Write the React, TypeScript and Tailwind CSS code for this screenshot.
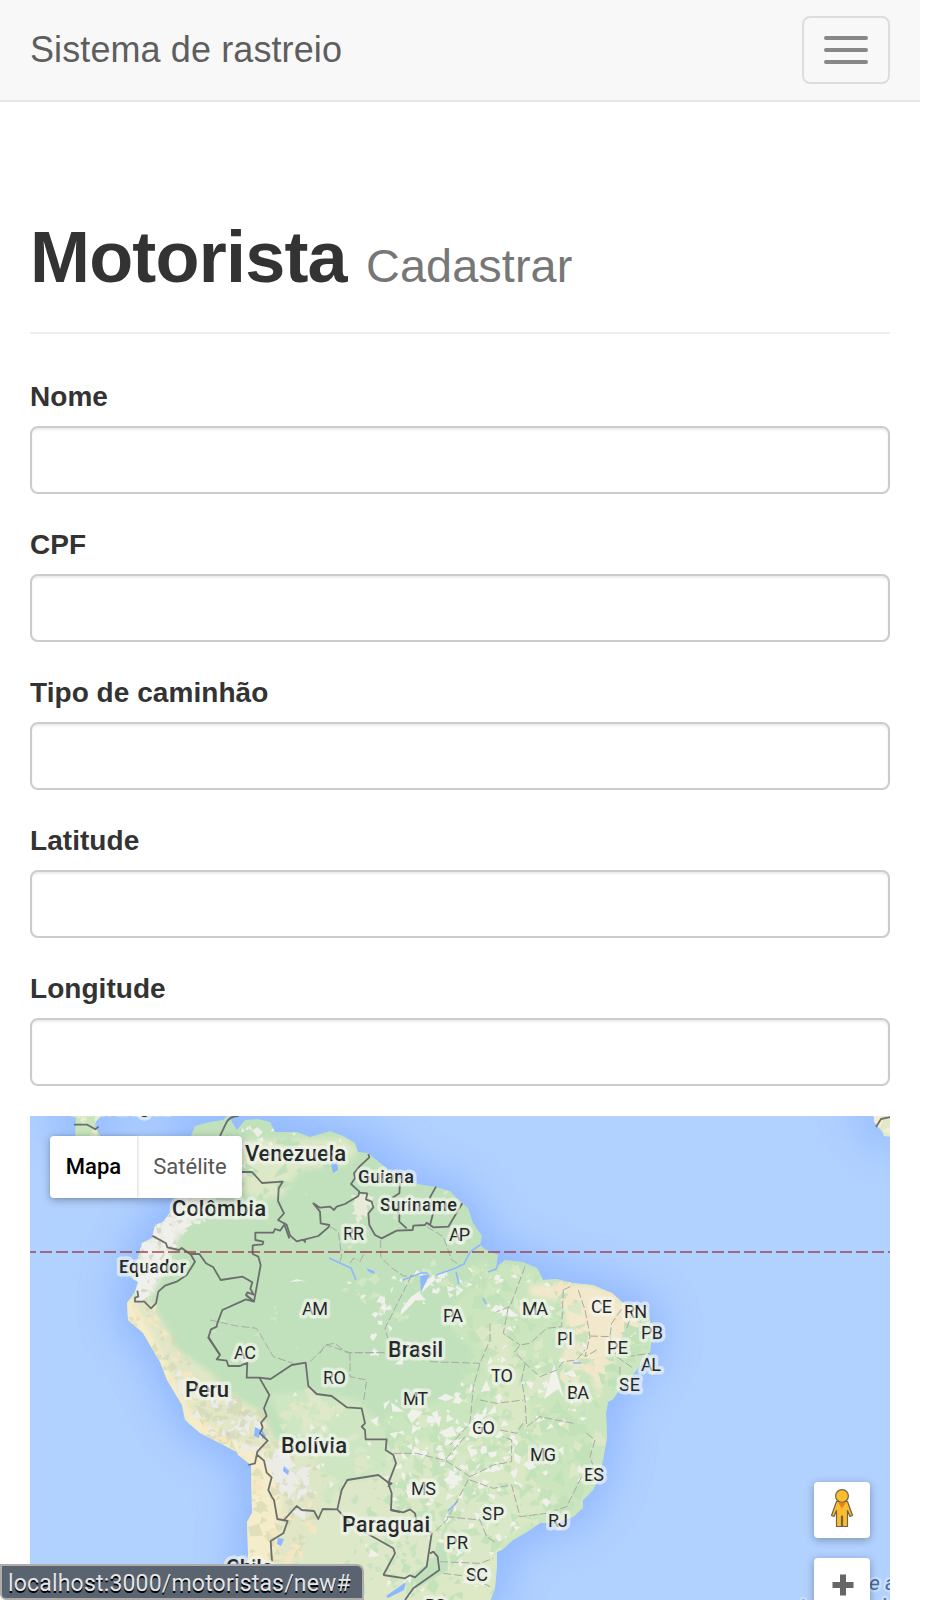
import React from "react";

const fields = ["Nome", "CPF", "Tipo de caminhão", "Latitude", "Longitude"];

type Label = [text: string, x0: number, x1: number, baseline: number, size: number, weight: number];

const labels: Label[] = [
  ["Nicarágua", 87, 170, 1113, 19, 500],
  ["Venezuela", 245, 346, 1161, 22, 500],
  ["Colômbia", 172, 266, 1216, 22, 500],
  ["Brasil", 388, 443, 1357, 22, 500],
  ["Peru", 185, 229, 1397, 22, 500],
  ["Bolívia", 281, 347, 1453, 22, 500],
  ["Paraguai", 342, 430, 1532, 22, 500],
  ["Chile", 226, 273, 1575, 22, 500],
  ["Guiana", 358, 414, 1183, 18, 500],
  ["Suriname", 380, 457, 1211, 18, 500],
  ["Equador", 119, 186, 1273, 18, 500],
  ["RR", 343, 364, 1240, 18, 400],
  ["AP", 449, 470, 1241, 18, 400],
  ["AM", 302, 328, 1315, 18, 400],
  ["PA", 443, 463, 1322, 18, 400],
  ["MA", 522, 548, 1315, 18, 400],
  ["CE", 591, 612, 1313, 18, 400],
  ["RN", 624, 647, 1318, 18, 400],
  ["PB", 641, 663, 1339, 18, 400],
  ["PI", 557, 573, 1345, 18, 400],
  ["PE", 607, 628, 1354, 18, 400],
  ["AL", 641, 661, 1371, 18, 400],
  ["SE", 619, 640, 1391, 18, 400],
  ["TO", 491, 513, 1382, 18, 400],
  ["BA", 567, 589, 1399, 18, 400],
  ["GO", 472, 495, 1434, 18, 400],
  ["MG", 530, 556, 1461, 18, 400],
  ["ES", 584, 604, 1481, 18, 400],
  ["MT", 403, 428, 1405, 18, 400],
  ["MS", 411, 436, 1495, 18, 400],
  ["SP", 482, 504, 1520, 18, 400],
  ["RJ", 548, 568, 1527, 18, 400],
  ["PR", 446, 468, 1549, 18, 400],
  ["SC", 466, 488, 1581, 18, 400],
  ["RS", 425, 446, 1612, 18, 400],
  ["AC", 234, 256, 1359, 18, 400],
  ["RO", 323, 346, 1384, 18, 400],
];

const land =
  "191,1136 195,1126 210,1122 223,1120 229,1114 232,1122 237,1130 245,1120 258,1119 270,1122 275,1132 297,1132 310,1137 330,1131 343,1136 355,1143 358,1152 368,1153 385,1167 397,1177 417,1184 436,1187 450,1191 462,1203 468,1208 473,1223 482,1236 480,1245 485,1249 498,1255 496,1267 505,1260 523,1262 537,1268 543,1280 557,1279 573,1283 593,1285 612,1293 623,1303 647,1308 650,1320 652,1337 650,1352 642,1363 630,1378 618,1392 613,1399 608,1402 606,1413 607,1437 603,1460 598,1480 593,1490 583,1500 583,1508 573,1517 557,1522 540,1523 527,1532 513,1540 502,1550 497,1552 497,1567 495,1588 487,1610 246,1610 247,1570 248,1553 247,1522 252,1513 251,1465 238,1455 237,1452 200,1433 185,1420 182,1405 167,1380 160,1362 143,1333 128,1320 127,1303 135,1292 138,1282 130,1277 137,1260 142,1243 152,1238 155,1225 163,1222 172,1210 178,1198 180,1160";
const panama = "56,1112 76,1118 75,1137 102,1138 95,1127 97,1117 94,1112";
const africa = "864,1112 874,1117 876,1125 882,1131 884,1136 892,1137 892,1112";

function random(seed: number) {
  let s = seed;
  return () => {
    s = (s * 16807) % 2147483647;
    return s / 2147483647;
  };
}

function inside(x: number, y: number, poly: number[][]) {
  let hit = false;
  for (let i = 0, j = poly.length - 1; i < poly.length; j = i++) {
    const [xi, yi] = poly[i];
    const [xj, yj] = poly[j];
    if (yi > y !== yj > y && x < ((xj - xi) * (y - yi)) / (yj - yi) + xi) hit = !hit;
  }
  return hit;
}

/** Irregular slivers of land cover scattered over a region. */
function cover(region: string, count: number, size: number, seed: number) {
  const poly = region.split(" ").map((p) => p.split(",").map(Number));
  const xs = poly.map((p) => p[0]);
  const ys = poly.map((p) => p[1]);
  const x0 = Math.min(...xs), x1 = Math.max(...xs), y0 = Math.min(...ys), y1 = Math.max(...ys);
  const rnd = random(seed);
  let d = "";
  for (let n = 0, tries = 0; n < count && tries < count * 6; tries++) {
    const x = x0 + rnd() * (x1 - x0);
    const y = y0 + rnd() * (y1 - y0);
    if (!inside(x, y, poly)) continue;
    n++;
    const r = size * (0.4 + rnd() * 0.9);
    const a = rnd() * 6.28;
    const corners = rnd() > 0.5 ? 4 : 3;
    for (let k = 0; k < corners; k++) {
      const t = a + (k * 6.28) / corners + rnd() * 0.9;
      const q = r * (0.3 + rnd() * 0.9);
      d += `${k ? "L" : "M"}${(x + Math.cos(t) * q).toFixed(1)} ${(y + Math.sin(t) * q).toFixed(1)}`;
    }
    d += "Z";
  }
  return d;
}

const central = "480,1262 540,1270 575,1290 590,1350 600,1400 600,1450 580,1500 500,1545 440,1560 400,1500 385,1450 385,1415 455,1400 475,1350 440,1320 470,1290";
const southern = "370,1450 430,1440 500,1465 560,1500 500,1545 495,1600 400,1600 360,1540";
const andesNorth = "178,1198 200,1198 190,1215 178,1240 165,1270 152,1295 140,1300 136,1270 145,1240 160,1225";
const andes = "128,1290 150,1300 168,1330 178,1350 210,1372 232,1395 262,1412 275,1440 310,1450 325,1480 318,1520 300,1560 300,1610 245,1610 250,1470 200,1434 182,1405 160,1362 128,1318";
const altiplano = "150,1310 172,1350 190,1375 235,1400 262,1420 275,1448 308,1470 315,1500 285,1510 270,1490 262,1455 215,1440 190,1410 170,1370";
const northeast = "530,1285 573,1283 593,1285 612,1293 623,1303 647,1308 650,1325 630,1345 615,1355 600,1385 600,1400 590,1370 560,1362 570,1340 565,1315 558,1300 530,1295";
const amazonRiver = "335,1285 390,1275 470,1268 500,1265 510,1290 470,1300 430,1295 395,1330 360,1300";
const llanos = "240,1140 345,1138 358,1150 345,1165 300,1170 283,1195 262,1200 235,1190";
const bolivia = "270,1395 310,1390 360,1400 385,1430 390,1470 340,1480 330,1505 300,1470 285,1430";
const chaco = "325,1485 380,1475 392,1510 425,1520 430,1560 410,1580 440,1580 400,1610 290,1610 300,1560 318,1520";

function TerrainMap() {
  return (
    <svg className="block h-full w-full" viewBox="30 1116 860 484" fontFamily='Roboto, "Liberation Sans", sans-serif'>
      <defs>
        <clipPath id="land">
          <polygon points={land} />
        </clipPath>
        <filter id="shelf" x="-20%" y="-20%" width="140%" height="140%">
          <feGaussianBlur stdDeviation="20" />
        </filter>
        <filter id="soft" x="-20%" y="-20%" width="140%" height="140%">
          <feGaussianBlur stdDeviation="2.5" />
        </filter>
      </defs>
      <rect x="30" y="1116" width="860" height="484" fill="#b1d1ff" />
      <g filter="url(#shelf)" fill="#8db5ff" stroke="#8db5ff" strokeWidth="26" strokeLinejoin="round" opacity=".85">
        <polygon points={land} />
        <polygon points={panama} />
        <polygon points={africa} />
        <path d="M100 1112H270L400 1150" fill="none" strokeWidth="14" />
      </g>

      <polygon points={panama} fill="#c9e5bd" />
      <path d={cover(panama, 10, 5, 12)} fill="#e8edd0" />
      <polygon points={africa} fill="#e3e9c8" />
      <path d="M874 1112v10l6 6 4-10zM882 1131l8-4v6z" fill="#f3eed3" />
      <polygon points={land} fill="#c1e1bc" />

      <g clipPath="url(#land)">
        <g filter="url(#soft)">
          <polygon points={central} fill="#cbe6be" />
          <path d="M590 1290L670 1300 640 1400 600 1480 570 1530 480 1560 400 1520 385 1420 500 1380 560 1350z" fill="#cbe6be" />
          <polygon points={southern} fill="#d9e8c6" />
          <polygon points={chaco} fill="#dde8c8" />
          <path d="M390 1560L430 1590 500 1550 495 1610 380 1610z" fill="#dce8c6" />
          <polygon points={llanos} fill="#dce8c6" />
          <polygon points={bolivia} fill="#cfe6c2" />
          <polygon points={andes} fill="#e0e6c6" />
          <polygon points={northeast} fill="#f2e9cd" />
          <path d="M127 1290L150 1330 165 1360 190 1410 210 1425 255 1450 280 1465 282 1500 275 1550 272 1610 240 1610 245 1460 190 1430 120 1320z" fill="#f5ecc9" />
          <polygon points={andesNorth} fill="#e9ecdf" />
          <path d="M480 1330l25-10 10 40 15 50-5 80-20 10-8-90z" fill="#dbe8c5" />
        </g>
        <path d={cover(central, 200, 10, 7)} fill="#c0e1b9" opacity=".8" />
        <path d={cover(central, 110, 8, 21)} fill="#dbe8c8" />
        <path d={cover(central, 110, 5.5, 33)} fill="#f0f1eb" />
        <path d={cover("385,1400 500,1380 520,1440 480,1490 440,1500 400,1490", 62, 7, 42)} fill="#f1f1ec" />
        <path d={cover(southern, 90, 7, 51)} fill="#c5e3bb" />
        <path d={cover(southern, 50, 5, 61)} fill="#f1f0ea" />
        <path d={cover(amazonRiver, 36, 5, 71)} fill="#eff0e8" />
        <path d={cover(amazonRiver, 30, 7, 72)} fill="#d0e7c2" />
        <path d={cover(llanos, 20, 9, 81)} fill="#c1e1bc" />
        <path d={cover("235,1120 350,1135 355,1155 280,1150 240,1180", 18, 5, 82)} fill="#eeefe3" />
        <path d={cover(andes, 130, 7, 91)} fill="#d3d9b2" opacity=".65" />
        <path d={cover(andes, 80, 6, 92)} fill="#f3e6c1" />
        <path d={cover(altiplano, 42, 7, 93)} fill="#ebebe7" />
        <path d={cover(altiplano, 50, 5, 94)} fill="#cfd4bd" opacity=".6" />
        <path d={cover("255,1445 290,1450 312,1490 305,1515 280,1490", 22, 8, 99)} fill="#ebebe8" />
        <path d={cover(andesNorth, 70, 8, 95)} fill="#efefec" />
        <path d={cover(andesNorth, 30, 5, 96)} fill="#d6dacd" />
        <path d={cover("190,1190 235,1195 205,1220 180,1245", 26, 6, 97)} fill="#ebebdf" />
        <path d={cover(bolivia, 40, 8, 101)} fill="#dbe8c8" />
        <path d={cover(bolivia, 16, 5, 102)} fill="#f0f0e9" />
        <path d={cover("292,1400 320,1395 335,1415 310,1425 290,1415", 20, 8, 103)} fill="#dfe8c8" />
        <path d={cover(chaco, 36, 6, 104)} fill="#c9e5bf" />
        <path d={cover("350,1195 372,1195 372,1220 355,1222", 12, 7, 105)} fill="#e9ebd9" />
        <path d={cover(northeast, 46, 6, 106)} fill="#f4e5c6" />
        <path d={cover("570,1340 615,1355 600,1400 570,1395 560,1370", 26, 7, 107)} fill="#e9e8cb" />
        <path d={cover("620,1335 655,1310 650,1355 610,1400 600,1385", 34, 7, 108)} fill="#c1e1b8" />
        <path d={cover("245,1160 440,1170 470,1240 440,1340 330,1350 200,1350 260,1250", 26, 4, 109)} fill="#d2e8c7" />
        <path d={cover("370,1290 430,1300 400,1400 375,1430", 14, 5, 110)} fill="#f0f1ea" />
        <path d="M424 1285l10-11 1 6-14 13zM554 1364l10 34-6-9-14 10zM401 1310l10-13 10-7-8 13-12 12zM289 1282l8-3 10 3-6-1z" fill="#f2f2ed" />
        <path d="M415 1572l18-12 4-18 9 2 2 26-32 19z" fill="#c1e1bc" />
        <path d="M255 1427l6 3-2 8-5-2zM262 1430l4 6-4 3zM284 1466l5 5-1 4-5-4zM278 1538l6 1-3 7-4-2zM386 1596l20-14-2 8-16 8zM331 1164l6-3 1 9-5 3zM420 1276l10-2-9 18zM366 1268l8 3 1 3-6-2z" fill="#8db7ff" />
        <path d="M329 1258l22 10 5 12M403 1280l18-7 7 0M436 1275l20-7 8-4 6-12 10-7M456 1272l3 12M488 1272l8-3 5-10M448 1511l10-10M573 1363h8M483 1298l3 6" fill="none" stroke="#8db7ff" strokeWidth="1.6" />
      </g>

      <g fill="none" stroke="#a8aaa6" strokeWidth="3" strokeDasharray="24 8" strokeLinejoin="round">
        <path transform="translate(230 1110) scale(.33333)" d="M300 350l25 15 10 75-8 20M452 390v50l28 30 40 28h30M590 350l50 30 25 70 25 15M545 495L465 655l10 35M360 460l10-15 15 5M390 455l15-30M270 730l15-25 30-5 35 28h90" />
        <path transform="translate(430 1200) scale(.33333)" d="M285 200l-45 120-40 15M180 370v50l-30 70-20 70-10 110-60 65M0 485l150 5M400 270l-5 110-45 5-50 45-30 5-15 20 30 35 45 40 50-20 20-25 40-5 25-30M445 270l20 60 10 50 5 30-15 60 35-20M480 408l60 2 5-40 35-50M540 410l20 60 50 35M590 470l70-10M235 320l-15 80 50 35M285 490l-10 50 10 60 5 80 40-30 50 10 50 10M150 600l50 10 80-10M400 270l30-15M590 385l20-55M570 500v30" />
        <path transform="translate(380 1340) scale(.33333)" d="M255 290l-60 70 75 50-70 130-35 35M270 410l70-35 55-10V300l-25-10M270 420l70 25 55-10 25 95 80-10 60-20 20-40 30-60M620 280l25 20-15 50 10 30M40 340h70l80 20M200 530l100 10 20 50 30 20M180 665l120 5 40-15M190 700l80 10 60 30M360 270l50 10 25-40" />
        <path transform="translate(100 1340) scale(.33333)" d="M330-60l80 18 60 7 50 85 60 20M630 65l50-50 70 23h110M750 38v72l50 10-10 70" />
      </g>

      <g fill="none" stroke="#6c6e6d" strokeWidth="5.4" strokeLinejoin="round">
        <path transform="translate(0 1080) scale(.33333)" d="M222 134h40l24 14 10-8M716 108q-28 0-38 22l-18 38M726 276h30l30 33 62-4-12 20-2 38 18 37-18 20 18 10 16 45" />
        <path
          transform="translate(230 1110) scale(.33333)"
          d="M415 132l3 10-30 28-16 20 3 15-12 17 25 23-3 13-40 24-25 8-8 10-12-10-30 3-20-13 20 25 2 35 26 5-3 7-30 26-40 10v8l-5-7-20 5-20-18-10-32-8-5M388 248l24 2-4 18 17 7 5 17-15 18 3 35 17 30 20 10 45-23 48-2 2-13 35-2 5-7 20 14 45-2 42-70M510 220l-2 30-23 15 5 25 18 20v25l22 20M618 230l-18 32 12 38-12 45M162 345l-12 17-15-5-5 11H76v22l24 5-2 8-30 3v26l17 8 7 25-20 110-24-20"
        />
        <path
          transform="translate(30 1110) scale(.33333)"
          d="M672 575l-24-20 4-8 19 7-10-18 6-19-29-17-66 10-22-38-22-12-20-28h-28l-25-18-8 6-35-8-4-12-41-23M480 430l15 25-25 40-30 20-35 12-20 18-7 35-15 15-20-20h-28v-12l10-3-3-18M672 575l-24-7-71 32-15 40-2 10-17 8-8 25 35 52"
        />
        <path
          transform="translate(100 1340) scale(.33333)"
          d="M325-10l35 55-10 13 30 4 5 16h35l22-10-2 45h38l34 4 63-42 42-7 8 70 25 24 45 6 45 34 45 3 10 45-10 10 10 10 2 28h63l-3 32 23 15 8 25-23 60 10 30-2 50 27 6M478 113l30 52-16 40 8 23-17 20 5 14-8 18 23 22-31 33-7 35-20 5M472 345l20 17 8 36 15 14-10 38 10 20 7 10 10 57 31 6-13 37-38 23 4 62M552 540l38-42 15 12 37 3 13 24 13-30 44 1 13-58 17-30 93-15 33 25M712 508l38 42 50 30 80 45 5 15-35 65M860 425l15 5-12 10"
        />
        <path transform="translate(380 1340) scale(.33333)" d="M32 510l38 7 20-9 15 12 5 25 45 35-15 100-35 32-15-6-15 9-65-10M75 780l25-35 78-55-5-40-13-15-10 5" />
        <path d="M876 1127l5-8 10-2" strokeWidth="1.8" />
      </g>

      <line x1="24" x2="890" y1="1252" y2="1252" stroke="#983843" strokeOpacity=".68" strokeWidth="2" strokeDasharray="12 4" />

      <g>
        {labels.map(([text, x0, x1, y, size, weight]) => (
          <text
            key={text}
            x={x0}
            y={y}
            textLength={x1 - x0}
            fontSize={size}
            fontWeight={weight}
            fill="#26282b"
            stroke="#f2f6ee"
            strokeOpacity=".68"
            strokeWidth="7"
            strokeLinejoin="round"
            paintOrder="stroke"
          >
            {text}
          </text>
        ))}
        <g fontStyle="italic" fontSize="21" fill="#4b6a97" stroke="#c9deff" strokeWidth="5" strokeLinejoin="round" paintOrder="stroke">
          <text x="869" y="1590">e a</text>
          <text x="799" y="1613">t</text>
          <text x="881" y="1613">i</text>
        </g>
      </g>
    </svg>
  );
}

function Pegman() {
  return (
    <svg className="h-[56px] w-[56px]" viewBox="0 0 56 56" stroke="#6b6350" strokeWidth="1.2" fill="#fcbd2c" strokeLinejoin="round">
      <path d="M22.500 19.500h11L38.500 33.500l-2.500 1-2.500-6V44.500h-5V34h-1v10.500h-5V28.500l-2.500 6-2.500-1z" />
      <circle cx="28" cy="14" r="6.400" />
      <path d="M24 20.500h8l-4 6z" fill="#e5821b" stroke="none" />
    </svg>
  );
}

export default function App() {
  return (
    <div className="h-[1600px] w-full bg-white">
      <div className='relative h-[1600px] w-[920px] overflow-hidden font-["Liberation_Sans",Arial,sans-serif] text-[28px] leading-[40px] text-[#333]'>
        <nav className="flex h-[102px] items-start justify-between border-b-2 border-[#e7e7e7] bg-[#f8f8f8] px-[30px]">
          <a className="pt-[30px] text-[36px] leading-[40px] tracking-[0.1px] text-[#5e5e5e]">Sistema de rastreio</a>
          <button className="mt-4 flex h-[68px] w-[88px] flex-col items-center justify-center gap-2 rounded-lg border-2 border-[#ddd]">
            <span className="h-1 w-11 rounded-[2px] bg-[#888]" />
            <span className="h-1 w-11 rounded-[2px] bg-[#888]" />
            <span className="h-1 w-11 rounded-[2px] bg-[#888]" />
          </button>
        </nav>

        <main className="px-[30px]">
          <header className="mt-[114px] h-[118px] border-b-2 border-[#eee] pt-[2px]">
            <h1 className="text-[72px] font-bold leading-[79px] tracking-[-0.8px]">
              Motorista <small className="text-[46.8px] font-normal leading-none tracking-[0.1px] text-[#777]">Cadastrar</small>
            </h1>
          </header>

          <form className="mt-[42px]">
            {fields.map((name) => (
              <div key={name} className="mb-[30px]">
                <label className="mb-[9px] block pt-px font-bold leading-[40px] tracking-[0.05px]">{name}</label>
                <input className="block h-[68px] w-full rounded-lg border-2 border-[#ccc] bg-white px-6 shadow-[inset_0_2px_2px_rgba(0,0,0,0.075)] outline-none" />
              </div>
            ))}
          </form>

          <section className='relative h-[484px] overflow-hidden font-[Roboto,"Liberation_Sans",sans-serif]'>
            <TerrainMap />
            <div className="absolute left-5 top-5 flex h-[62px] rounded-[4px] bg-white text-[22px] leading-[62px] shadow-[0_2px_8px_rgba(0,0,0,0.3)]">
              <button className="w-[87px] rounded-l-[4px] text-center font-medium text-black shadow-[1px_0_3px_rgba(0,0,0,0.15)]">Mapa</button>
              <button className="w-[105px] pl-px text-center text-[#565656]">Satélite</button>
            </div>
            <div className="absolute right-5 top-[366px] flex flex-col gap-5">
              <button className="h-[56px] w-[56px] rounded-[4px] bg-white shadow-[0_2px_8px_rgba(0,0,0,0.3)]">
                <Pegman />
              </button>
              <button className="h-[56px] w-[56px] rounded-[4px] bg-white shadow-[0_2px_8px_rgba(0,0,0,0.3)]">
                <svg className="h-[56px] w-[56px]" viewBox="0 0 56 56">
                  <path d="M18.500 27h21M29 16.500v21" stroke="#666" strokeWidth="6" />
                </svg>
              </button>
            </div>
          </section>
        </main>

        <div className='absolute bottom-0 left-0 flex h-[36px] w-[364px] items-center whitespace-nowrap rounded-bl-[6px] rounded-tr-[7px] border-2 border-[#b0acac] bg-[#5a6470] pl-[6px] pt-[3px] font-[Roboto,sans-serif] text-[23px] leading-[29px] tracking-[0.18px] text-[#e4e5e8] [text-shadow:0_2px_0_#000]'>
          localhost:3000/motoristas/new#
        </div>
      </div>
    </div>
  );
}
